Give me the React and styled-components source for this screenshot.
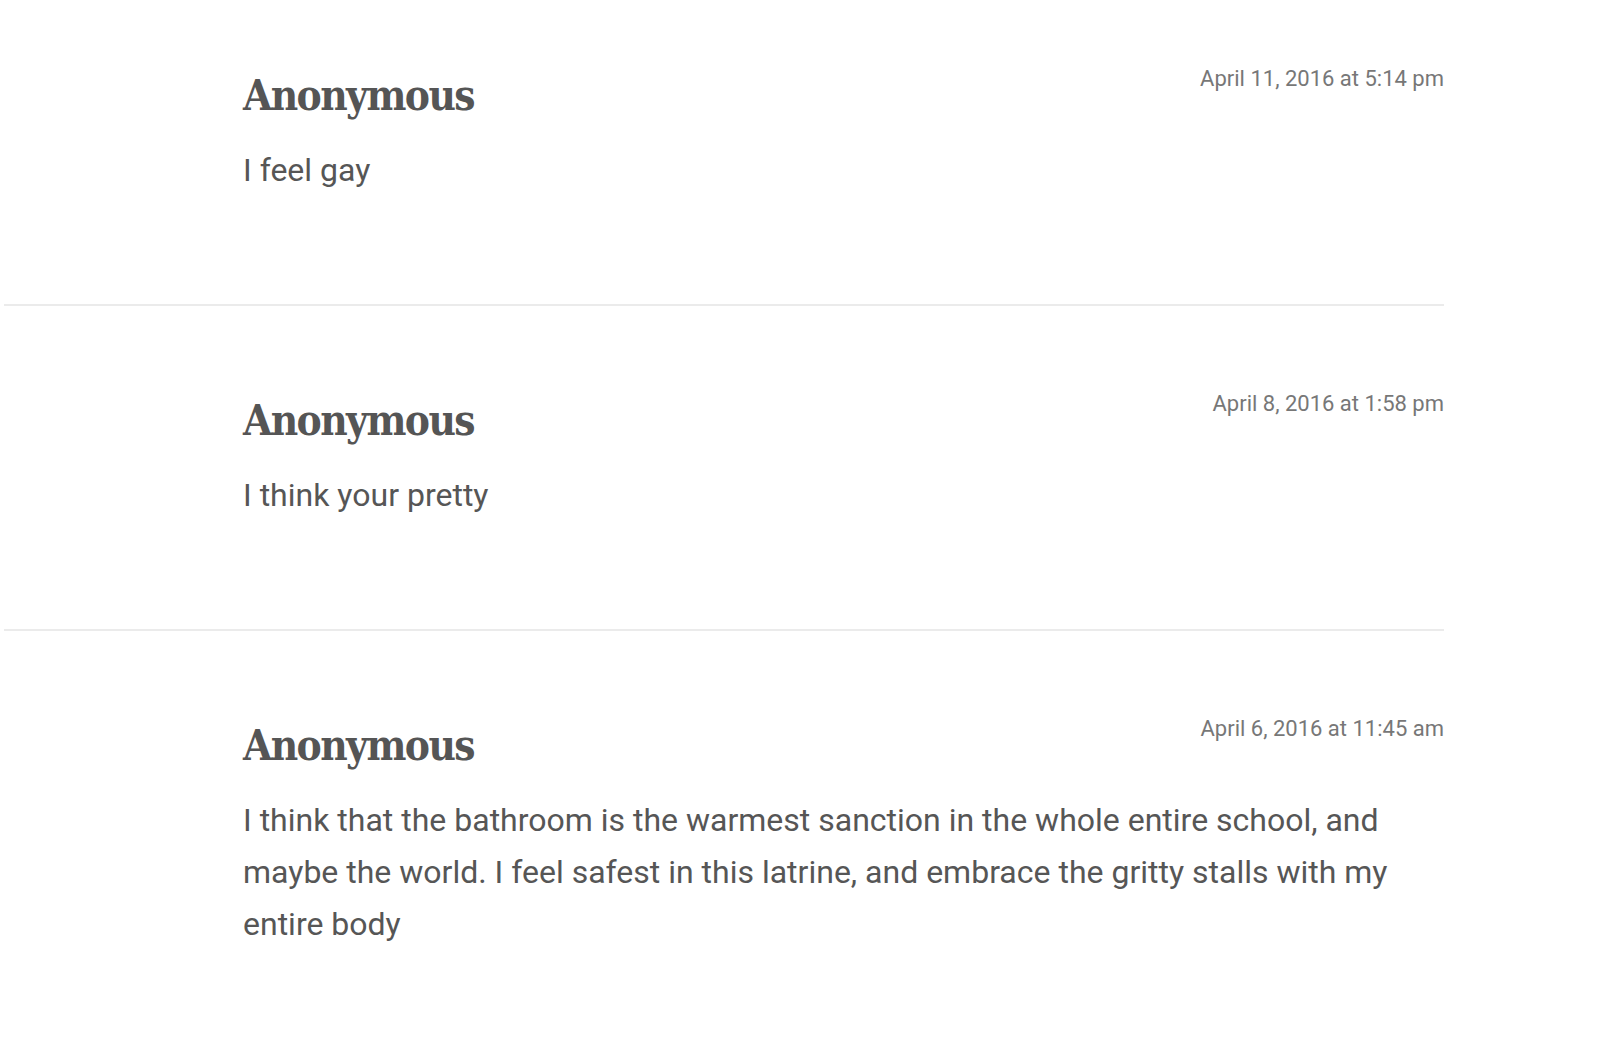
import React from 'react';
import styled, { createGlobalStyle } from 'styled-components';

const GlobalStyle = createGlobalStyle`
  html, body {
    margin: 0;
    padding: 0;
    background: #fff;
  }
  body {
    font-family: Roboto, "Liberation Sans", Arial, sans-serif;
    overflow: hidden;
  }
`;

const CommentList = styled.ol`
  list-style: none;
  margin: -19px 0 0 4px;
  padding: 0;
  width: 1440px;
`;

const CommentItem = styled.li`
  padding: 78px 0 108px 239px;
  border-bottom: 2px solid #ebebeb;
`;

const CommentHeader = styled.div`
  display: flex;
  justify-content: space-between;
  align-items: flex-start;
  gap: 24px;
`;

const Author = styled.h3`
  margin: 0;
  font-family: "DejaVu Serif Condensed", "DejaVu Serif", "Liberation Serif", serif;
  font-stretch: condensed;
  font-weight: 700;
  font-size: 42px;
  line-height: 74px;
  letter-spacing: -1.6px;
  color: #555;
`;

const Date = styled.time`
  padding-top: 5px;
  font-family: Roboto, "Liberation Sans", Arial, sans-serif;
  font-size: 22px;
  line-height: 30px;
  color: #777;
  white-space: nowrap;
`;

const Body = styled.p`
  margin: 11px 0 0;
  font-family: Roboto, "Liberation Sans", Arial, sans-serif;
  font-size: 32px;
  line-height: 52px;
  color: #565656;
  padding-right: 20px;
`;

const comments = [
  {
    id: 1,
    author: 'Anonymous',
    date: 'April 11, 2016 at 5:14 pm',
    text: 'I feel gay',
  },
  {
    id: 2,
    author: 'Anonymous',
    date: 'April 8, 2016 at 1:58 pm',
    text: 'I think your pretty',
  },
  {
    id: 3,
    author: 'Anonymous',
    date: 'April 6, 2016 at 11:45 am',
    text:
      'I think that the bathroom is the warmest sanction in the whole entire school, and maybe the world. I feel safest in this latrine, and embrace the gritty stalls with my entire body',
  },
];

export default function App() {
  return (
    <>
      <GlobalStyle />
      <CommentList>
        {comments.map((c) => (
          <CommentItem key={c.id}>
            <CommentHeader>
              <Author>{c.author}</Author>
              <Date>{c.date}</Date>
            </CommentHeader>
            <Body>{c.text}</Body>
          </CommentItem>
        ))}
      </CommentList>
    </>
  );
}
